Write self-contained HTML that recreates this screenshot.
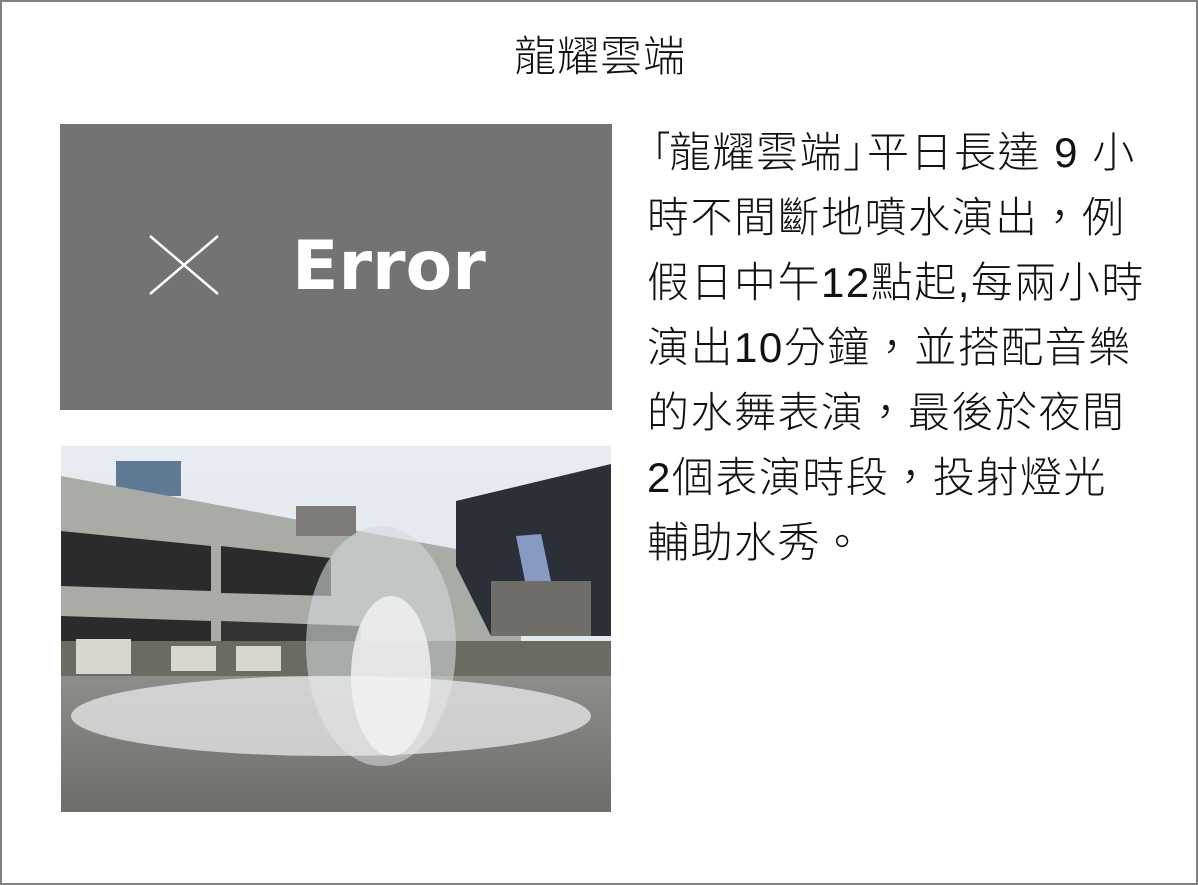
<!DOCTYPE html>
<html><head><meta charset="utf-8"><style>
html,body{margin:0;padding:0;background:#fff}
body{width:1198px;height:885px;position:relative;overflow:hidden;font-family:"Liberation Sans","Noto Sans CJK TC",sans-serif;}
.frame{position:absolute;left:0;top:0;width:1194px;height:881px;border:2px solid #808080;}
.title{position:absolute;left:1px;width:1198px;top:32px;text-align:center;font-size:42px;letter-spacing:1px;line-height:50px;color:#111;font-weight:300}
.err{position:absolute;left:60px;top:124px;width:552px;height:286px;background:#737373;}
.err .t{position:absolute;left:232px;top:108px;font-family:"DejaVu Sans",sans-serif;font-weight:bold;font-size:68px;line-height:70px;color:#fff;}
.txt{position:absolute;left:647px;top:120px;font-size:42px;letter-spacing:1.5px;line-height:65px;color:#111;font-weight:300;white-space:nowrap}
.b1{display:inline-block;width:22px;overflow:hidden;vertical-align:top}
.b1 span{margin-left:-16px}
.b2{display:inline-block;width:24px;overflow:hidden;vertical-align:top}
.photo{position:absolute;left:61px;top:446px;width:550px;height:366px;}
</style></head><body>
<div class="frame"></div>
<div class="title">龍耀雲端</div>
<div class="err">
<svg style="position:absolute;left:89px;top:111px" width="70" height="60"><path d="M1 1L69 59M69 1L1 59" stroke="#fff" stroke-width="2.5"/></svg>
<div class="t">Error</div>
</div>
<div class="txt"><span class="b1"><span>「</span></span>龍耀雲端<span class="b2">」</span>平日長達 9 小<br>時不間斷地噴水演出，例<br>假日中午12點起,每兩小時<br>演出10分鐘，並搭配音樂<br>的水舞表演，最後於夜間<br>2個表演時段，投射燈光<br>輔助水秀。</div>
<svg class="photo" viewBox="0 0 550 366" preserveAspectRatio="none">
<defs><linearGradient id="sky" x1="0" y1="0" x2="0" y2="1"><stop offset="0" stop-color="#e6ecf2"/><stop offset="1" stop-color="#dfe5ea"/></linearGradient>
<linearGradient id="gr" x1="0" y1="0" x2="0" y2="1"><stop offset="0" stop-color="#8f8d8a"/><stop offset="1" stop-color="#6f6d6a"/></linearGradient></defs>
<rect width="550" height="366" fill="url(#sky)"/>
<rect x="55" y="15" width="65" height="35" fill="#5f7a95"/>
<polygon points="0,30 460,115 460,205 0,205" fill="#a9aca5"/>
<polygon points="0,85 150,100 150,145 0,140" fill="#2a2c2c"/>
<polygon points="160,100 270,112 270,150 160,147" fill="#2a2c2c"/>
<polygon points="0,170 150,175 150,200 0,200" fill="#2a2c2c"/>
<polygon points="160,175 300,180 300,205 160,205" fill="#333"/>
<rect x="235" y="60" width="60" height="30" fill="#7d7c78"/>
<polygon points="395,55 550,18 550,190 430,190 395,120" fill="#2b3038"/>
<polygon points="455,90 480,88 490,135 465,140" fill="#8899c4"/>
<rect x="430" y="135" width="100" height="55" fill="#6f6d68"/>
<rect x="0" y="195" width="550" height="35" fill="#6a6c62"/>
<rect x="0" y="230" width="550" height="136" fill="url(#gr)"/>
<rect x="15" y="193" width="55" height="35" fill="#d9d6cf"/>
<rect x="110" y="200" width="45" height="25" fill="#d9d6cf"/>
<rect x="175" y="200" width="45" height="25" fill="#d9d6cf"/>
<ellipse cx="320" cy="200" rx="75" ry="120" fill="#d4d8da" opacity=".6"/>
<ellipse cx="270" cy="270" rx="260" ry="40" fill="#e8eaea" opacity=".75"/>
<ellipse cx="330" cy="230" rx="40" ry="80" fill="#f2f3f3" opacity=".8"/>
</svg>
</body></html>
